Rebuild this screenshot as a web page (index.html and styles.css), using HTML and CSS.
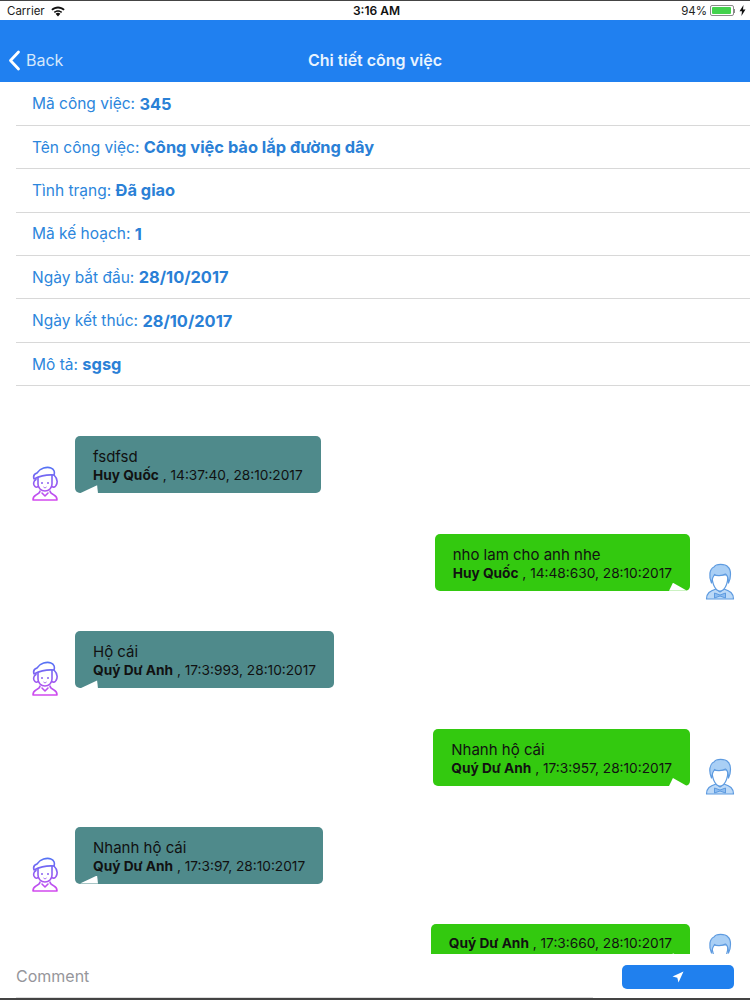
FILE: index.html
```html
<!DOCTYPE html>
<html lang="vi">
<head>
<meta charset="utf-8">
<title>Chi tiết công việc</title>
<link rel="stylesheet" href="styles.css">
</head>
<body>
<svg class="defs" width="0" height="0" aria-hidden="true">
  <defs>
    <linearGradient id="grad" gradientUnits="userSpaceOnUse" x1="0" y1="0" x2="0" y2="35">
      <stop offset="0" stop-color="#4f74f5"/>
      <stop offset="1" stop-color="#d548ee"/>
    </linearGradient>
    <symbol id="girl" viewBox="0 0 30 35">
      <g fill="none" stroke="url(#grad)" stroke-width="1.6" stroke-linejoin="round" stroke-linecap="round">
        <path d="M4 13 C3 10 4 8 7 7 C10 2 17 0.500 21 2 C24 3 25 6 24 9 C18 8.500 10 10 4 13 Z"/>
        <path d="M6 13.500 C3 15 3 19 5 20.500 C6 21.500 7 21.500 8 20.500"/>
        <path d="M24 9 C27 12 28 16 26 19.500 C25 21.500 23 21.500 22 20.500"/>
        <path d="M8 12 V18 C8 22 11 25 15 25 C19 25 22 22 22 18 V9"/>
        <path d="M10 25 C10 27 8 28 6 29 C4 30 3 32 3 34 H27 C27 32 26 30 24 29 C22 28 20 27 20 25"/>
        <path d="M12 27 L15 30 L18 27"/>
      </g>
      <circle cx="12" cy="17" r="1" fill="#8a62f0"/>
      <circle cx="18" cy="17" r="1" fill="#8a62f0"/>
      <path d="M13.500 21 C14.500 22 15.500 22 16.500 21" fill="none" stroke="#a05cf0" stroke-width="1"/>
    </symbol>
    <symbol id="man" viewBox="0 0 30 37">
      <path d="M1.500 36 C1.500 30 5 28 11 26 L15 29 L19 26 C25 28 28.500 30 28.500 36 Z" fill="#bcd9f7" stroke="#5e9be0" stroke-width="1.2" stroke-linejoin="round"/>
      <path d="M7 12 C7 22 11 28 15 28 C19 28 23 22 23 12 Z" fill="#fff" stroke="#5e9be0" stroke-width="1.2"/>
      <path d="M6.500 20 C3.500 13 4.500 6 9 4 C11 0.500 20 0.500 23 4 C26.500 7 26 15 23.500 20 C23.500 15 22.500 12.500 20.500 11 C17 13 11 13 9.500 11.500 C8 13.500 7 16 6.500 20 Z" fill="#a9cff5" stroke="#5e9be0" stroke-width="1.2" stroke-linejoin="round"/>
      <path d="M9.500 30 L15 32 L20.500 30 L20.500 35 L15 33 L9.500 35 Z" fill="#8dbcf0" stroke="#5e9be0" stroke-width="1"/>
    </symbol>
  </defs>
</svg>
<div class="screen">
  <header class="status">
    <div class="status-left">
      <span>Carrier</span>
      <svg class="wifi" viewBox="0 0 16 12"><path d="M8 11.500 L5.600 8.700 C7 7.500 9 7.500 10.400 8.700 Z M3.800 6.800 C6.200 4.700 9.800 4.700 12.200 6.800 L11.200 8 C9.400 6.400 6.600 6.400 4.800 8 Z M1.300 4.200 C5.300 0.700 10.700 0.700 14.700 4.200 L13.500 5.500 C10.300 2.700 5.700 2.700 2.500 5.500 Z" fill="#111"/></svg>
    </div>
    <div class="status-time">3:16 AM</div>
    <div class="status-right">
      <span>94%</span>
      <span class="battery"><span class="battery-fill"></span></span>
      <span class="battery-cap"></span>
      <svg class="bolt" viewBox="0 0 7 11"><path d="M4.500 0 L0.500 6.200 H3 L2.400 11 L6.500 4.600 H4 Z" fill="#111"/></svg>
    </div>
  </header>
  <nav class="navbar">
    <div class="back">
      <svg class="chevron" viewBox="0 0 13 21"><path d="M10.500 2 L2.500 10.500 L10.500 19" fill="none" stroke="#fff" stroke-width="2.800" stroke-linecap="round" stroke-linejoin="round"/></svg>
      <span>Back</span>
    </div>
    <div class="nav-title">Chi tiết công việc</div>
  </nav>
  <section class="details">
    <div class="row">Mã công việc: <b>345</b></div>
    <div class="row">Tên công việc: <b>Công việc bảo lắp đường dây</b></div>
    <div class="row">Tình trạng: <b>Đã giao</b></div>
    <div class="row">Mã kế hoạch: <b>1</b></div>
    <div class="row">Ngày bắt đầu: <b>28/10/2017</b></div>
    <div class="row">Ngày kết thúc: <b>28/10/2017</b></div>
    <div class="row">Mô tả: <b>sgsg</b></div>
  </section>
  <main class="chat">
    <div class="msg in">
      <svg class="avatar girl"><use href="#girl"/></svg>
      <div class="bubble"><div class="text">fsdfsd</div><div class="meta"><b>Huy Quốc</b> , 14:37:40, 28:10:2017</div></div>
    </div>
    <div class="msg out">
      <div class="bubble"><div class="text">nho lam cho anh nhe</div><div class="meta"><b>Huy Quốc</b> , 14:48:630, 28:10:2017</div></div>
      <svg class="avatar man"><use href="#man"/></svg>
    </div>
    <div class="msg in">
      <svg class="avatar girl"><use href="#girl"/></svg>
      <div class="bubble"><div class="text">Hộ cái</div><div class="meta"><b>Quý Dư Anh</b> , 17:3:993, 28:10:2017</div></div>
    </div>
    <div class="msg out">
      <div class="bubble"><div class="text">Nhanh hộ cái</div><div class="meta"><b>Quý Dư Anh</b> , 17:3:957, 28:10:2017</div></div>
      <svg class="avatar man"><use href="#man"/></svg>
    </div>
    <div class="msg in">
      <svg class="avatar girl"><use href="#girl"/></svg>
      <div class="bubble"><div class="text">Nhanh hộ cái</div><div class="meta"><b>Quý Dư Anh</b> , 17:3:97, 28:10:2017</div></div>
    </div>
    <div class="msg out">
      <div class="bubble short"><div class="meta"><b>Quý Dư Anh</b> , 17:3:660, 28:10:2017</div></div>
      <svg class="avatar man"><use href="#man"/></svg>
    </div>
  </main>
  <footer class="composer">
    <div class="comment">Comment</div>
    <button class="send" type="button" aria-label="Send">
      <svg class="send-icon" viewBox="0 0 12 12"><path d="M11.500 0.500 L0.500 5.500 L5.300 6.700 L6.500 11.500 Z" fill="#fff"/></svg>
    </button>
  </footer>
</div>
</body>
</html>
```

FILE: styles.css
```css
* { box-sizing: border-box; }
html, body { margin: 0; padding: 0; background: #fff; }
body { font-family: Inter, "Liberation Sans", Arial, sans-serif; }
.defs { position: absolute; }
.screen {
  width: 750px;
  height: 1000px;
  display: flex;
  flex-direction: column;
  overflow: hidden;
  border-top: 1px solid #444;
  border-bottom: 2px solid #444;
}
.status {
  height: 19px;
  flex: none;
  display: grid;
  grid-template-columns: 1fr auto 1fr;
  align-items: center;
  padding: 0 4px 0 7px;
  font-size: 11.500px;
  color: #222;
}
.status-left { display: flex; align-items: center; gap: 5px; }
.wifi { width: 16px; height: 12px; }
.status-time { font-weight: 600; font-size: 12px; color: #111; }
.status-right { display: flex; justify-content: flex-end; align-items: center; }
.battery {
  width: 24px;
  height: 11px;
  margin-left: 3px;
  padding: 1px;
  border: 1px solid #8a8a8a;
  border-radius: 2px;
  display: block;
}
.battery-fill { display: block; width: 94%; height: 100%; background: #43d24d; border-radius: 1px; }
.battery-cap { width: 1px; height: 4px; background: #8a8a8a; margin-right: 4px; }
.bolt { width: 7px; height: 11px; }
.navbar {
  height: 62px;
  flex: none;
  background: #2080f0;
  color: #fff;
  padding-top: 18px;
  display: grid;
  grid-template-columns: 1fr auto 1fr;
  align-items: center;
}
.back { grid-column: 1; display: flex; align-items: center; gap: 5px; padding-left: 8px; font-size: 16px; color: #d5e8fc; }
.chevron { width: 13px; height: 21px; }
.nav-title { grid-column: 2; font-size: 16px; font-weight: 600; color: #e8f3fe; }
.details { padding: 0.500px 0 0 16px; flex: none; }
.row {
  height: 43.4px;
  padding: 0 0 0 16px;
  border-bottom: 1px solid #d8d8d8;
  display: flex;
  align-items: center;
  white-space: pre;
  font-size: 15.500px;
  color: #2c86dc;
}
.row b { font-size: 16.400px; font-weight: 700; color: #2a80d6; }
.chat {
  flex: 1;
  min-height: 0;
  overflow: hidden;
  padding: 50px 15px 0 30px;
  display: flex;
  flex-direction: column;
  gap: 40.600px;
}
.msg { display: flex; align-items: flex-end; flex: none; }
.msg.out { justify-content: flex-end; }
.avatar { flex: none; }
.avatar.girl { width: 30px; height: 35px; margin-bottom: -8px; }
.avatar.man { width: 30px; height: 37px; margin-bottom: -9px; }
.bubble {
  position: relative;
  padding: 12px 18px 9px;
  border-radius: 5px;
  color: #111;
}
.bubble.short { padding-top: 10px; }
.msg.in .bubble { background: #4f8a8b; margin-left: 15px; }
.msg.out .bubble { background: #33c90f; margin-right: 15px; }
.bubble::after {
  content: "";
  position: absolute;
  bottom: 0;
  width: 18px;
  height: 8px;
  background: #fff;
}
.msg.in .bubble::after { left: 5px; clip-path: polygon(0 100%, 95% 0, 100% 100%); }
.msg.out .bubble::after { right: 3px; clip-path: polygon(0 100%, 22% 0, 100% 100%); }
.text { font-size: 15px; line-height: 18px; }
.meta { font-size: 13.700px; line-height: 18px; white-space: nowrap; }
.composer {
  height: 44px;
  flex: none;
  background: #fff;
  padding: 11px 16px 0;
  display: flex;
  align-items: flex-start;
  justify-content: space-between;
}
.comment {
  width: 577px;
  height: 33px;
  border-bottom: 1px solid #ddd;
  font-size: 16px;
  line-height: 22px;
  color: #96969b;
}
.send {
  width: 112px;
  height: 24px;
  border: 0;
  padding: 0;
  border-radius: 5px;
  background: #2080ee;
  display: flex;
  align-items: center;
  justify-content: center;
}
.send-icon { width: 12px; height: 12px; }
```
